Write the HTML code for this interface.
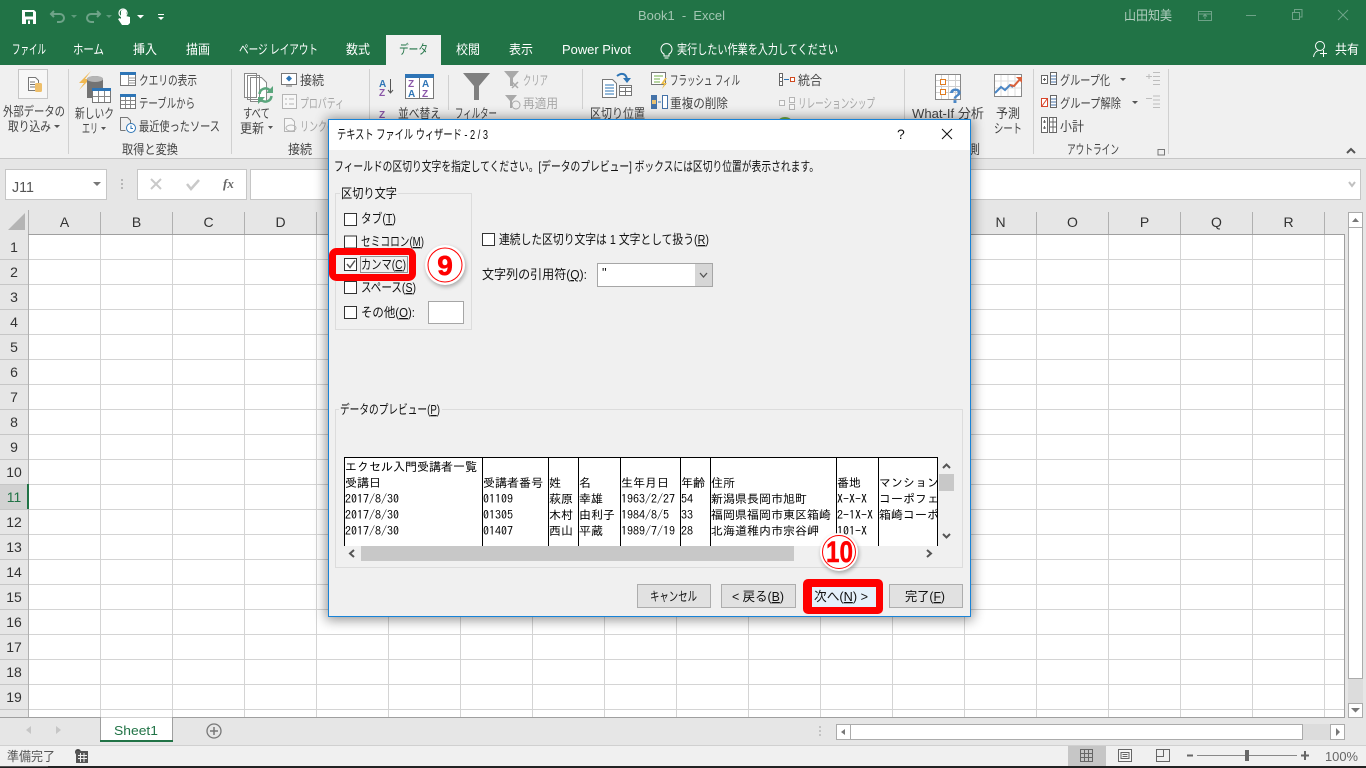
<!DOCTYPE html>
<html><head><meta charset="utf-8"><title>Book1 - Excel</title>
<style>html,body{margin:0;padding:0;background:#e6e6e6;overflow:hidden}svg{display:block}text{white-space:pre}</style></head>
<body>
<svg xmlns="http://www.w3.org/2000/svg" width="1366" height="768" viewBox="0 0 1366 768" font-family="'Liberation Sans','Noto Sans CJK JP',sans-serif" font-size="13" fill="#444">
<defs>
<pattern id="g" patternUnits="userSpaceOnUse" x="29" y="235" width="72" height="25"><path d="M71.5 0V25M0 24.5H72" stroke="#d4d4d4" fill="none"/></pattern>
<filter id="sh" x="-10%" y="-10%" width="120%" height="120%"><feGaussianBlur stdDeviation="6"/></filter>
<filter id="sh2" x="-30%" y="-30%" width="160%" height="160%"><feGaussianBlur stdDeviation="2"/></filter>
</defs>
<!-- chrome -->
<rect width="1366" height="65" fill="#217346"/>
<rect y="65" width="1366" height="93" fill="#f0f0f0"/>
<rect y="158" width="1366" height="1" fill="#c6c6c6"/>
<rect y="159" width="1366" height="558" fill="#e6e6e6"/>
<rect x="386" y="35" width="55" height="30" fill="#f0f0f0"/>
<!-- qat -->
<path d="M22 10H34L36 12V24H22ZM25 12V16.500H33V12ZM26 19.500V24H33V19.500ZM28 20.500V24H30V20.500Z" fill="#fff" fill-rule="evenodd"/>
<path d="M54 11 51 14 54 17M51 14H60A4 4 0 0 1 60 22H57" fill="none" stroke="#6ea388" stroke-width="2"/>
<path d="M97 11 100 14 97 17M100 14H91A4 4 0 0 0 91 22H94" fill="none" stroke="#6ea388" stroke-width="2"/>
<path d="M71 15h6l-3 3zM106 15h6l-3 3z" fill="#5d9a7b"/>
<path d="M121 11a3 3 0 0 1 5 0v5l4 1v6l-2 2h-6l-4-6 2-1 1 1z" fill="#fff"/><circle cx="123" cy="13" r="4" fill="none" stroke="#fff" stroke-width="1.2"/>
<path d="M137 15h7l-3.500 3.500zM158 17h6l-3 3zM158 14h6v1h-6z" fill="#fff"/>
<text x="638" y="20" font-size="12.500" fill="#a3c6b3" textLength="87" lengthAdjust="spacingAndGlyphs" xml:space="preserve">Book1  -  Excel</text>
<text x="1124" y="20" fill="#b2cfc0" textLength="48" lengthAdjust="spacingAndGlyphs">山田知美</text>
<path d="M1198.500 11.500h13v9h-13zM1198.500 14h13M1205 19v-4M1203 16.500l2-2 2 2" fill="none" stroke="#6ea388"/>
<path d="M1246 15.500h10" stroke="#6ea388" fill="none"/>
<path d="M1292.500 12.500h7v7h-7zM1294.500 12v-2.500h7.500v7.500h-2.500" fill="none" stroke="#6ea388"/>
<path d="M1338 10l10 10M1348 10l-10 10" stroke="#6ea388" fill="none"/>
<!-- tabs -->
<g fill="#fff">
<text x="12" y="54" textLength="34" lengthAdjust="spacingAndGlyphs">ファイル</text>
<text x="73" y="54" textLength="31" lengthAdjust="spacingAndGlyphs">ホーム</text>
<text x="133" y="54" textLength="24" lengthAdjust="spacingAndGlyphs">挿入</text>
<text x="186" y="54" textLength="24" lengthAdjust="spacingAndGlyphs">描画</text>
<text x="239" y="54" textLength="79" lengthAdjust="spacingAndGlyphs">ページ レイアウト</text>
<text x="346" y="54" textLength="24" lengthAdjust="spacingAndGlyphs">数式</text>
<text x="456" y="54" textLength="24" lengthAdjust="spacingAndGlyphs">校閲</text>
<text x="509" y="54" textLength="24" lengthAdjust="spacingAndGlyphs">表示</text>
<text x="562" y="54" textLength="69" lengthAdjust="spacingAndGlyphs">Power Pivot</text>
<text x="677" y="54" textLength="161" lengthAdjust="spacingAndGlyphs">実行したい作業を入力してください</text>
<text x="1335" y="54" textLength="24" lengthAdjust="spacingAndGlyphs">共有</text>
</g>
<text x="399" y="54" fill="#217346" textLength="29" lengthAdjust="spacingAndGlyphs">データ</text>
<path d="M669 56v-2a5.500 5.500 0 1 0-5 0v2zM664.500 58h4" fill="none" stroke="#fff"/>
<circle cx="1320" cy="46" r="4.500" fill="none" stroke="#fff"/><path d="M1313.500 57c1-5 3-6 5-6.500M1323.500 50v7M1320 53.500h7" fill="none" stroke="#fff"/>
<!-- ribbon separators -->
<path d="M68.500 69v85M231.500 69v85M369.500 69v85M448.500 75v35M582.500 69v40M904.500 69v85M1033.500 69v85M1168.500 69v85" stroke="#d0d0d0" fill="none"/>
<!-- ribbon text -->
<text x="3" y="116" textLength="62" lengthAdjust="spacingAndGlyphs">外部データの</text>
<text x="8" y="131" textLength="43" lengthAdjust="spacingAndGlyphs">取り込み</text>
<path d="M54 125h6l-3 3zM268 126h5l-2.500 3z" fill="#555"/>
<text x="75" y="118" textLength="39" lengthAdjust="spacingAndGlyphs">新しいク</text>
<text x="82" y="133" textLength="16" lengthAdjust="spacingAndGlyphs">エリ</text>
<path d="M101 127h5l-2.500 3z" fill="#555"/>
<text x="139" y="85" textLength="58" lengthAdjust="spacingAndGlyphs">クエリの表示</text>
<text x="139" y="108" textLength="56" lengthAdjust="spacingAndGlyphs">テーブルから</text>
<text x="139" y="131" textLength="81" lengthAdjust="spacingAndGlyphs">最近使ったソース</text>
<text x="122" y="154" textLength="56" lengthAdjust="spacingAndGlyphs">取得と変換</text>
<text x="243" y="118" textLength="27" lengthAdjust="spacingAndGlyphs">すべて</text>
<text x="240" y="133" textLength="24" lengthAdjust="spacingAndGlyphs">更新</text>
<text x="300" y="85" textLength="24" lengthAdjust="spacingAndGlyphs">接続</text>
<text x="300" y="108" fill="#a6a6a6" textLength="44" lengthAdjust="spacingAndGlyphs">プロパティ</text>
<text x="300" y="131" fill="#a6a6a6" textLength="36" lengthAdjust="spacingAndGlyphs">リンクの</text>
<text x="288" y="154" textLength="24" lengthAdjust="spacingAndGlyphs">接続</text>
<text x="398" y="118" textLength="43" lengthAdjust="spacingAndGlyphs">並べ替え</text>
<text x="455" y="118" textLength="42" lengthAdjust="spacingAndGlyphs">フィルター</text>
<text x="523" y="85" fill="#a6a6a6" textLength="25" lengthAdjust="spacingAndGlyphs">クリア</text>
<text x="523" y="108" fill="#a6a6a6" textLength="35" lengthAdjust="spacingAndGlyphs">再適用</text>
<text x="590" y="118" textLength="55" lengthAdjust="spacingAndGlyphs">区切り位置</text>
<text x="670" y="85" textLength="70" lengthAdjust="spacingAndGlyphs">フラッシュ フィル</text>
<text x="670" y="108" textLength="58" lengthAdjust="spacingAndGlyphs">重複の削除</text>
<text x="798" y="85" textLength="24" lengthAdjust="spacingAndGlyphs">統合</text>
<text x="798" y="108" fill="#a6a6a6" textLength="77" lengthAdjust="spacingAndGlyphs">リレーションシップ</text>
<text x="912" y="118" textLength="72" lengthAdjust="spacingAndGlyphs">What-If 分析</text>
<text x="996" y="118" textLength="24" lengthAdjust="spacingAndGlyphs">予測</text>
<text x="994" y="133" textLength="28" lengthAdjust="spacingAndGlyphs">シート</text>
<text x="956" y="154" textLength="24" lengthAdjust="spacingAndGlyphs">予測</text>
<text x="1060" y="85" textLength="50" lengthAdjust="spacingAndGlyphs">グループ化</text>
<text x="1060" y="108" textLength="61" lengthAdjust="spacingAndGlyphs">グループ解除</text>
<text x="1060" y="131" textLength="24" lengthAdjust="spacingAndGlyphs">小計</text>
<text x="1067" y="154" textLength="52" lengthAdjust="spacingAndGlyphs">アウトライン</text>
<path d="M1120 78h6l-3 3zM1132 101h6l-3 3z" fill="#555"/>
<!-- external data -->
<rect x="18.500" y="69.500" width="29" height="29" fill="#f7f7f7" stroke="#c6c6c6"/>
<path d="M28.500 77.500h7l3 3v10h-10z" fill="#fff" stroke="#777"/><path d="M30 82h5M30 84.500h5M30 87h5" stroke="#777"/><rect x="35" y="83" width="7" height="9" rx="1.500" fill="#eebf6b"/>
<!-- new query -->
<path d="M91 71l-12 12h5l-5 7 11-11h-5l6-8z" fill="#f0b850"/>
<path d="M87 79a8 3 0 0 1 16 0v19H87z" fill="#737373"/><ellipse cx="95" cy="79" rx="8" ry="3" fill="#b5b5b5"/>
<rect x="92.500" y="88.500" width="18" height="14" fill="#fff" stroke="#777"/><rect x="92" y="88" width="19" height="3" fill="#2e75b6"/><path d="M98.500 91v11M104.500 91v11M93 96.500h17" stroke="#888" fill="none"/>
<!-- query small icons -->
<rect x="120.500" y="72.500" width="15" height="13" fill="#fff" stroke="#777"/><rect x="120" y="72" width="16" height="3" fill="#2e75b6"/><path d="M129 78h6M129 80.500h6M129 83h6M128.500 75v10" stroke="#999" fill="none"/>
<rect x="120.500" y="95.500" width="15" height="13" fill="#fff" stroke="#777"/><rect x="120" y="94" width="16" height="3" fill="#2e75b6"/><path d="M125.500 97v11M130.500 97v11M121 100.500h14M121 104.500h14" stroke="#888" fill="none"/>
<path d="M120.500 130.500v-13h7l3 3v3M120.500 130.500h5" fill="none" stroke="#777"/><circle cx="131" cy="128" r="4.500" fill="#fff" stroke="#2e75b6"/><path d="M131 125.500v3h2" stroke="#2e75b6" fill="none"/>
<!-- refresh -->
<path d="M244.500 73.500h12v24h-12zM247.500 75.500h12v24h-12zM250.500 77.500h11l5 5v19h-16z" fill="#fff" stroke="#888"/>
<path d="M259.500 94a6 6 0 0 1 10-4M271.500 96a6 6 0 0 1-10 4" fill="none" stroke="#5aa67d" stroke-width="2.500"/><path d="M273 86v7h-7zM258 104v-7h7z" fill="#5aa67d"/>
<!-- connections -->
<rect x="281.500" y="73.500" width="15" height="11" fill="#fff" stroke="#777"/><path d="M286 86h6" stroke="#777" fill="none"/><path d="M289 75.500l3 3-3 3-3-3z" fill="#2e75b6"/>
<rect x="282.500" y="94.500" width="14" height="14" fill="#f7f7f7" stroke="#b5b5b5"/><path d="M285 99h2M289 99h5M285 104h2M289 104h5" stroke="#b5b5b5" fill="none"/>
<path d="M284.500 118.500h7l3 3v10h-10z" fill="#f7f7f7" stroke="#b5b5b5"/><ellipse cx="291" cy="128" rx="5" ry="3" fill="none" stroke="#b5b5b5"/>
<!-- sort -->
<text x="379" y="87" font-size="10" font-weight="bold" fill="#2e75b6">A</text><text x="379" y="96" font-size="10" font-weight="bold" fill="#8a56a8">Z</text>
<path d="M390.500 79v14M388 90l2.500 3 2.500-3" fill="none" stroke="#555"/>
<rect x="405.500" y="75.500" width="28" height="23" fill="#fff" stroke="#777"/><rect x="405" y="74" width="29" height="4" fill="#2e75b6"/><path d="M419.500 78v20" stroke="#777" fill="none"/>
<text x="408" y="87" font-size="10" font-weight="bold" fill="#8a56a8">Z</text><text x="408" y="97" font-size="10" font-weight="bold" fill="#2e75b6">A</text><text x="422" y="87" font-size="10" font-weight="bold" fill="#2e75b6">A</text><text x="422" y="97" font-size="10" font-weight="bold" fill="#8a56a8">Z</text>
<text x="379" y="118" font-size="10" font-weight="bold" fill="#8a56a8">Z</text>
<!-- filter -->
<path d="M463 73h27l-11 13v14h-5V86z" fill="#7f7f7f"/>
<path d="M504 71h15l-6 7v8h-3v-8z" fill="#a9a9a9"/><path d="M512 82l6 6M518 82l-6 6" stroke="#a9a9a9" stroke-width="1.500"/>
<path d="M505 95h12l-5 6v7h-2v-7z" fill="#a9a9a9"/><circle cx="516" cy="105" r="4" fill="none" stroke="#a9a9a9"/>
<!-- text to columns -->
<path d="M602.500 79.500h10l4 4v14h-14z" fill="#fff" stroke="#777"/><path d="M605 85h9M605 88h9M605 91h9M605 94h9" stroke="#2e75b6" fill="none"/>
<rect x="619.500" y="85.500" width="12" height="10" fill="#fff" stroke="#777"/><path d="M620 87.500h11M625.500 88v7M620 91.500h11" stroke="#777" fill="none"/>
<path d="M617 76c5-4 9-2 10 3" fill="none" stroke="#2e75b6" stroke-width="2"/><path d="M623 78h8l-4 5z" fill="#2e75b6"/>
<!-- flash/dup -->
<rect x="651.500" y="72.500" width="14" height="12" fill="#fff" stroke="#777"/><path d="M654 76h9M654 79h6M654 82h6" stroke="#70ad47" fill="none"/><path d="M665 78l-4 6h3l-2 5 5-6h-3l3-5z" fill="#eebf4a"/>
<rect x="651" y="95" width="6" height="14" fill="#4472a8"/><rect x="652" y="100" width="4" height="4" fill="#e8c070"/><rect x="662.500" y="95.500" width="5" height="13" fill="#fff" stroke="#4472a8"/><path d="M658 102h3" stroke="#2e75b6" fill="none"/>
<!-- consolidate/relationship -->
<path d="M779.500 73.500h3v12h-3zM779.500 77.500h3M779.500 81.500h3" fill="#fff" stroke="#666"/><path d="M784 79.500h5" stroke="#2e75b6" fill="none"/><rect x="790.500" y="77.500" width="4" height="4" fill="#fff" stroke="#d04a20"/>
<g fill="#f7f7f7" stroke="#b5b5b5"><rect x="779.500" y="100.500" width="5" height="5"/><rect x="789.500" y="97.500" width="5" height="5"/><rect x="789.500" y="104.500" width="5" height="5"/></g>
<ellipse cx="785" cy="122" rx="7" ry="5" fill="#70ad47"/>
<!-- dialog launchers & what-if -->
<rect x="935.500" y="74.500" width="25" height="25" fill="#fff" stroke="#888"/><path d="M941.500 75v24M948.500 75v24M955.500 75v24M936 80.500h24M936 86.500h24M936 92.500h24" stroke="#d0d0d0" fill="none"/>
<rect x="940.500" y="79.500" width="5" height="5" fill="#fff" stroke="#e07b20"/><rect x="940.500" y="89.500" width="5" height="5" fill="#fff" stroke="#e07b20"/>
<text x="949" y="103" font-family="'Liberation Sans',sans-serif" font-size="21" font-weight="bold" fill="#4a86c5">?</text>
<rect x="994.500" y="74.500" width="27" height="22" fill="#fff" stroke="#888"/><path d="M1001 75v21M1008 75v21M1015 75v21M995 81h26M995 88h26" stroke="#ddd" fill="none"/>
<path d="M995 93l6-6 4 3 5-5 3 2" fill="none" stroke="#4a86c5" stroke-width="2"/><path d="M1010 85l4 1 7-8" fill="none" stroke="#d9603a" stroke-width="2"/><path d="M1016 77h6v6z" fill="#d9603a"/>
<!-- outline -->
<g fill="#fff" stroke="#666"><rect x="1041.500" y="75.500" width="6" height="8"/><rect x="1041.500" y="98.500" width="6" height="8"/><rect x="1041.500" y="117.500" width="6" height="15"/><rect x="1050.500" y="72.500" width="6" height="12"/><rect x="1050.500" y="95.500" width="6" height="12"/><rect x="1049.500" y="117.500" width="7" height="15"/></g>
<path d="M1051 76h5M1051 79h5M1051 82h5M1051 99h5M1051 102h5M1051 105h5" stroke="#4472a8" fill="none"/>
<path d="M1043 79.500h3M1044.500 78v3M1043 122h3M1044.500 120v3M1043 128h3M1044.500 126v3M1050 122h6M1050 127h6M1053 118v14" stroke="#666" fill="none"/>
<path d="M1041.500 98.500h6v8h-6zM1042 106l5-7" stroke="#d8452a" fill="none"/>
<path d="M1146 76.500h6M1149 74v5M1153 72.500h7M1153 76.500h7M1153 80.500h7M1153 84.500h7M1146 98.500h6M1153 96h7M1153 100h7M1153 104h7M1153 107.500h7" stroke="#bdbdbd" fill="none"/>
<path d="M1158 149v6h6M1158.500 149.500h6v6" fill="none" stroke="#777"/>
<path d="M1347 153l4-4 4 4" fill="none" stroke="#555" stroke-width="2"/>
<!-- formula bar -->
<rect x="5.500" y="169.500" width="101" height="30" fill="#fff" stroke="#c6c6c6"/>
<text x="12" y="192" font-size="15" fill="#555" textLength="22" lengthAdjust="spacingAndGlyphs">J11</text>
<path d="M93 182h8l-4 4z" fill="#777"/>
<path d="M122 179v2M122 183v2M122 187v2" stroke="#a6a6a6" stroke-width="1.500" fill="none"/>
<rect x="137.500" y="169.500" width="109" height="30" fill="#fff" stroke="#c6c6c6"/>
<path d="M151 179l10 10M161 179l-10 10" stroke="#c9c9c9" stroke-width="2" fill="none"/>
<path d="M187 184l4 5 8-9" stroke="#c9c9c9" stroke-width="2.500" fill="none"/>
<text x="223" y="188" font-family="'Liberation Serif',serif" font-style="italic" font-weight="bold" font-size="13" fill="#666">fx</text>
<rect x="250.500" y="169.500" width="1110" height="30" fill="#fff" stroke="#c6c6c6"/>
<path d="M1349 182l3 4 3-4" stroke="#c0c0c0" stroke-width="2" fill="none"/>
<!-- sheet -->
<rect x="29" y="235" width="1315" height="482" fill="#fff"/>
<rect x="29" y="235" width="1315" height="482" fill="url(#g)"/>
<rect x="0" y="210" width="1344" height="24" fill="#e6e6e6"/>
<rect y="234" width="28" height="483" fill="#e6e6e6"/>
<rect x="0" y="484" width="28" height="25" fill="#d2d2d2"/>
<path d="M8 230l17-17v17z" fill="#b4b4b4"/>
<path d="M28.500 210v507M100.500 212v22M172.500 212v22M244.500 212v22M316.500 212v22M1036.500 212v22M1108.500 212v22M1180.500 212v22M1252.500 212v22M1324.500 212v22" stroke="#b0b0b0" fill="none"/>
<path d="M28 234.500H1344.500V717M0 717.500H1345" stroke="#9f9f9f" fill="none"/>
<path d="M0 259.500h28M0 284.500h28M0 309.500h28M0 334.500h28M0 359.500h28M0 384.500h28M0 409.500h28M0 434.500h28M0 459.500h28M0 484.500h28M0 509.500h28M0 534.500h28M0 559.500h28M0 584.500h28M0 609.500h28M0 634.500h28M0 659.500h28M0 684.500h28M0 709.500h28" stroke="#c6c6c6" fill="none"/>
<rect x="27" y="484" width="2" height="25" fill="#217346"/>
<g font-size="14" text-anchor="middle" fill="#333">
<text x="64.500" y="227">A</text><text x="136.500" y="227">B</text><text x="208.500" y="227">C</text><text x="280.500" y="227">D</text><text x="1000.500" y="227">N</text><text x="1072.500" y="227">O</text><text x="1144.500" y="227">P</text><text x="1216.500" y="227">Q</text><text x="1288.500" y="227">R</text>
<text x="14" y="252">1</text><text x="14" y="277">2</text><text x="14" y="302">3</text><text x="14" y="327">4</text><text x="14" y="352">5</text><text x="14" y="377">6</text><text x="14" y="402">7</text><text x="14" y="427">8</text><text x="14" y="452">9</text><text x="14" y="477">10</text><text x="14" y="502" fill="#217346">11</text><text x="14" y="527">12</text><text x="14" y="552">13</text><text x="14" y="577">14</text><text x="14" y="602">15</text><text x="14" y="627">16</text><text x="14" y="652">17</text><text x="14" y="677">18</text><text x="14" y="702">19</text>
</g>
<svg x="0" y="710" width="28" height="7"><text x="14" y="17" font-size="14" text-anchor="middle" fill="#333">20</text></svg>
<!-- v scrollbar -->
<rect x="1348" y="678" width="15" height="25" fill="#dcdcdc"/>
<rect x="1348.500" y="212.500" width="14" height="15" fill="#fff" stroke="#ababab"/>
<rect x="1348.500" y="227.500" width="14" height="451" fill="#fff" stroke="#ababab"/>
<rect x="1348.500" y="703.500" width="14" height="14" fill="#fff" stroke="#ababab"/>
<path d="M1352 222l3.500-4 3.500 4zM1351 708h9l-4.500 4.500z" fill="#777"/>
<!-- tab bar -->
<path d="M100 717.500h72.500V741H100z" fill="#fff"/><path d="M100.500 717v24M172.500 717v24" stroke="#9f9f9f" fill="none"/>
<rect x="100" y="740" width="73" height="2" fill="#217346"/>
<text x="114" y="735" fill="#217346" textLength="44" lengthAdjust="spacingAndGlyphs">Sheet1</text>
<path d="M31 726v8l-5-4zM56 726l5 4-5 4z" fill="#c6c6c6"/>
<circle cx="214" cy="731" r="7" fill="none" stroke="#777" stroke-width="1.300"/><path d="M210 731h8M214 727v8" stroke="#777" stroke-width="1.500" fill="none"/>
<path d="M820 726v2M820 730v2M820 734v2" stroke="#a0a0a0" fill="none"/>
<rect x="836.500" y="724.500" width="14" height="15" fill="#fff" stroke="#ababab"/>
<rect x="850.500" y="724.500" width="452" height="15" fill="#fff" stroke="#ababab"/>
<rect x="1303" y="724" width="27" height="16" fill="#dcdcdc"/>
<rect x="1330.500" y="724.500" width="14" height="15" fill="#fff" stroke="#ababab"/>
<path d="M845 729v6l-4-3zM1336 728v8l4-4z" fill="#777"/>
<!-- status -->
<rect y="745" width="1366" height="21" fill="#f0f0f0"/>
<rect y="745" width="1366" height="1" fill="#d0d0d0"/>
<rect y="766" width="1366" height="2" fill="#222"/>
<rect y="766" width="48" height="1" fill="#555"/>
<text x="7" y="761" textLength="48" lengthAdjust="spacingAndGlyphs" fill="#555">準備完了</text>
<circle cx="78" cy="752" r="3" fill="#444"/><path d="M76 751h12v12H76z" fill="#555"/><path d="M78 755.500h9M78 758.500h9M80.500 753v9M84 753v9" stroke="#f0f0f0" fill="none"/>
<rect x="1068" y="746" width="38" height="20" fill="#c6c6c6"/>
<path d="M1080.500 749.500h12v12h-12zM1084.500 750v11M1088.500 750v11M1081 753.500h11M1081 757.500h11" stroke="#666" fill="none"/>
<path d="M1118.500 749.500h13v12h-13z" fill="#f7f7f7" stroke="#666"/><path d="M1121 752.500h8v6h-8zM1122.500 754.500h5M1122.500 756.500h5" stroke="#666" fill="none"/>
<path d="M1156.500 749.500h13v12h-13zM1156.500 756.500h7v-7" fill="none" stroke="#666"/>
<path d="M1197 755.500h100" stroke="#888" fill="none"/><rect x="1187" y="754.500" width="6" height="2" fill="#666"/><rect x="1301" y="754.500" width="8" height="2" fill="#666"/><rect x="1304" y="751" width="2" height="9" fill="#666"/>
<rect x="1245" y="750" width="4" height="11" fill="#666"/>
<text x="1325" y="761" fill="#666" textLength="33" lengthAdjust="spacingAndGlyphs">100%</text>
<!-- dialog -->
<rect x="326" y="118" width="647" height="502" fill="#000" opacity=".42" filter="url(#sh)"/>
<rect x="328.500" y="119.500" width="642" height="497" fill="#f0f0f0" stroke="#1883d7"/>
<rect x="329" y="120" width="641" height="30" fill="#fff"/>
<g fill="#111">
<text x="337" y="139" textLength="151" lengthAdjust="spacingAndGlyphs">テキスト ファイル ウィザード - 2 / 3</text>
<text x="897" y="139" font-size="14">?</text>
<path d="M942 129l10 10M952 129l-10 10" stroke="#111" fill="none"/>
<text x="334" y="171" textLength="485" lengthAdjust="spacingAndGlyphs">フィールドの区切り文字を指定してください。[データのプレビュー] ボックスには区切り位置が表示されます。</text>
<rect x="335.500" y="193.500" width="136" height="136" fill="#f0f0f0" stroke="#dcdcdc"/>
<rect x="340" y="188" width="58" height="10" fill="#f0f0f0"/>
<text x="341" y="198" textLength="56" lengthAdjust="spacingAndGlyphs">区切り文字</text>
<text x="361" y="223" textLength="35" lengthAdjust="spacingAndGlyphs" xml:space="preserve">タブ(<tspan text-decoration="underline">T</tspan>)</text>
<text x="361" y="246" textLength="63" lengthAdjust="spacingAndGlyphs">セミコロン(<tspan text-decoration="underline">M</tspan>)</text>
<text x="361" y="269" textLength="45" lengthAdjust="spacingAndGlyphs">カンマ(<tspan text-decoration="underline">C</tspan>)</text>
<text x="361" y="292" textLength="55" lengthAdjust="spacingAndGlyphs">スペース(<tspan text-decoration="underline">S</tspan>)</text>
<text x="361" y="317" textLength="54" lengthAdjust="spacingAndGlyphs">その他(<tspan text-decoration="underline">O</tspan>):</text>
<text x="499" y="244" textLength="210" lengthAdjust="spacingAndGlyphs">連続した区切り文字は 1 文字として扱う(<tspan text-decoration="underline">R</tspan>)</text>
<text x="482" y="279" textLength="105" lengthAdjust="spacingAndGlyphs">文字列の引用符(<tspan text-decoration="underline">Q</tspan>):</text>
</g>
<g fill="#fff" stroke="#333"><rect x="344.500" y="213.500" width="12" height="12"/><rect x="344.500" y="236" width="12" height="12"/><rect x="344.500" y="258.500" width="12" height="12"/><rect x="344.500" y="281.500" width="12" height="12"/><rect x="344.500" y="306.500" width="12" height="12"/><rect x="482.500" y="233.500" width="12" height="12"/></g>
<path d="M347 264l3 3.500 5-7" fill="none" stroke="#555" stroke-width="1.500"/>
<rect x="360.500" y="256.500" width="47" height="16" fill="none" stroke="#333" stroke-dasharray="1 1"/>
<rect x="428.500" y="301.500" width="35" height="22" fill="#fff" stroke="#a6a6a6"/>
<rect x="597.500" y="263.500" width="115" height="23" fill="#fff" stroke="#a6a6a6"/>
<text x="602" y="277" fill="#111">"</text>
<rect x="695" y="264" width="17" height="22" fill="#d6d6d6"/><path d="M700 273l3.500 4 3.500-4" fill="none" stroke="#555" stroke-width="1.300"/>
<!-- preview -->
<rect x="335.500" y="409.500" width="627" height="158" fill="#f0f0f0" stroke="#dcdcdc"/>
<rect x="339" y="404" width="103" height="10" fill="#f0f0f0"/>
<text x="340" y="414" fill="#111" textLength="100" lengthAdjust="spacingAndGlyphs">データのプレビュー(<tspan text-decoration="underline">P</tspan>)</text>
<rect x="344" y="457" width="594" height="89" fill="#fff"/>
<path d="M344.500 546V457.500H937.500V546M482.500 457v89M548.500 457v89M578.500 457v89M620.500 457v89M680.500 457v89M710.500 457v89M836.500 457v89M878.500 457v89" fill="none" stroke="#000"/>
<svg x="344" y="457" width="594" height="89">
<g font-family="'IPAGothic','Noto Sans CJK JP',monospace" fill="#000" font-size="12">
<text x="1" y="14">エクセル入門受講者一覧</text><text x="1" y="30">受講日</text><text x="1" y="46">2017/8/30</text><text x="1" y="62">2017/8/30</text><text x="1" y="78">2017/8/30</text>
<text x="139" y="30">受講者番号</text><text x="139" y="46">01109</text><text x="139" y="62">01305</text><text x="139" y="78">01407</text>
<text x="205" y="30">姓</text><text x="205" y="46">萩原</text><text x="205" y="62">木村</text><text x="205" y="78">西山</text>
<text x="235" y="30">名</text><text x="235" y="46">幸雄</text><text x="235" y="62">由利子</text><text x="235" y="78">平蔵</text>
<text x="277" y="30">生年月日</text><text x="277" y="46">1963/2/27</text><text x="277" y="62">1984/8/5</text><text x="277" y="78">1989/7/19</text>
<text x="337" y="30">年齢</text><text x="337" y="46">54</text><text x="337" y="62">33</text><text x="337" y="78">28</text>
<text x="367" y="30">住所</text><text x="367" y="46">新潟県長岡市旭町</text><text x="367" y="62">福岡県福岡市東区箱崎</text><text x="367" y="78">北海道稚内市宗谷岬</text>
<text x="493" y="30">番地</text><text x="493" y="46">X-X-X</text><text x="493" y="62">2-1X-X</text><text x="493" y="78">101-X</text>
<text x="535" y="30">マンション</text><text x="535" y="46">コーポフェ</text><text x="535" y="62">箱崎コーポ</text>
</g></svg>
<rect x="361" y="546" width="433" height="15" fill="#c8c8c8"/>
<path d="M354 550l-4 3.500 4 3.500M927 550l4 3.500-4 3.500" fill="none" stroke="#555" stroke-width="2"/>
<rect x="939" y="474" width="15" height="17" fill="#c8c8c8"/>
<path d="M943 468l3.500-3.500 3.500 3.500M943 534l3.500 3.500 3.500-3.500" fill="none" stroke="#555" stroke-width="2"/>
<!-- buttons -->
<g fill="#e1e1e1" stroke="#adadad"><rect x="637.500" y="584.500" width="73" height="23"/><rect x="721.500" y="584.500" width="74" height="23"/><rect x="889.500" y="584.500" width="73" height="23"/></g>
<rect x="803" y="579" width="80" height="35" rx="5" fill="#f00"/>
<rect x="812" y="587" width="64" height="20" fill="#e5f1fb"/>
<g fill="#111">
<text x="650" y="601" textLength="47" lengthAdjust="spacingAndGlyphs">キャンセル</text>
<text x="732" y="601" textLength="52" lengthAdjust="spacingAndGlyphs">&lt; 戻る(<tspan text-decoration="underline">B</tspan>)</text>
<text x="814" y="601" textLength="54" lengthAdjust="spacingAndGlyphs">次へ(<tspan text-decoration="underline">N</tspan>) &gt;</text>
<text x="905" y="601" textLength="40" lengthAdjust="spacingAndGlyphs">完了(<tspan text-decoration="underline">F</tspan>)</text>
</g>
<!-- annotation 9 -->
<rect x="332.500" y="251.500" width="80" height="26" rx="4" fill="none" stroke="#f00" stroke-width="7"/>
<circle cx="446" cy="267" r="20" fill="#000" opacity=".3" filter="url(#sh2)"/>
<circle cx="445" cy="265" r="20" fill="#fff"/>
<circle cx="445" cy="265" r="17" fill="#fff" stroke="#f00"/>
<text x="445" y="275" text-anchor="middle" font-size="28" font-weight="bold" fill="#f00" stroke="#f00" stroke-width=".6">9</text>
<!-- annotation 10 -->
<circle cx="840" cy="554" r="19" fill="#000" opacity=".3" filter="url(#sh2)"/>
<circle cx="839" cy="552" r="19" fill="#fff"/>
<circle cx="839" cy="552" r="16.500" fill="#fff" stroke="#f00"/>
<text x="826" y="562" font-size="30" font-weight="bold" fill="#f00" stroke="#f00" stroke-width=".5" textLength="27" lengthAdjust="spacingAndGlyphs">10</text>
</svg>
</body></html>
